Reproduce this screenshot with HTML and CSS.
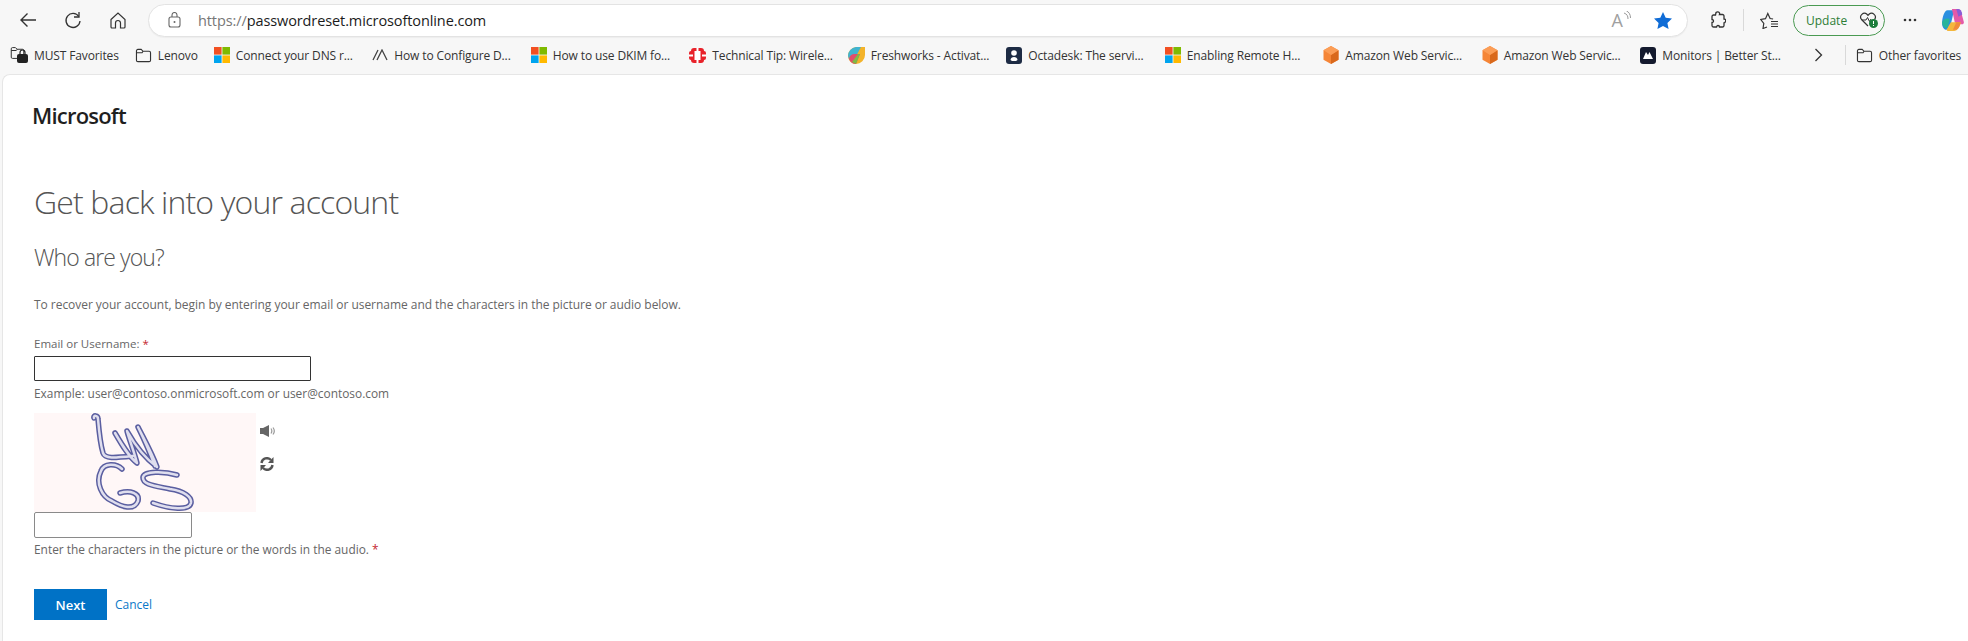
FILE: index.html
```html
<!DOCTYPE html>
<html lang="en">
<head>
<meta charset="utf-8">
<title>Get back into your account</title>
<link rel="stylesheet" href="styles.css">
</head>
<body>
<svg class="defs" width="0" height="0" aria-hidden="true">
  <symbol id="ms" viewBox="0 0 16 16">
    <rect x="0" y="0" width="7.6" height="7.6" fill="#f25022"/>
    <rect x="8.4" y="0" width="7.6" height="7.6" fill="#7fba00"/>
    <rect x="0" y="8.4" width="7.6" height="7.6" fill="#00a4ef"/>
    <rect x="8.4" y="8.4" width="7.6" height="7.6" fill="#ffb900"/>
  </symbol>
  <symbol id="folder" viewBox="0 0 18 16">
    <path d="M1.5 13V3a1.5 1.5 0 0 1 1.5-1.500h3.500l2 2H15A1.500 1.500 0 0 1 16.500 5v8a1.500 1.500 0 0 1-1.500 1.500H3A1.500 1.500 0 0 1 1.500 13z" fill="none" stroke="#333" stroke-width="1.200"/>
    <path d="M1.500 5h6l1-1.500" fill="none" stroke="#333" stroke-width="1.200"/>
  </symbol>
  <symbol id="aws" viewBox="0 0 16 18">
    <path d="M8 0l7.500 4.300v9.400L8 18 .5 13.700V4.300z" fill="#f58536"/>
    <path d="M8 9l7.500-4.700v9.400L8 18z" fill="#d9691c"/>
    <path d="M8 0l7.500 4.300L8 9 .5 4.300z" fill="#fb9d56"/>
  </symbol>
</svg>

<header class="toolbar">
  <svg class="tool back" width="18" height="16" viewBox="0 0 18 16"><path d="M17 8H2M8.500 1.500L2 8l6.500 6.500" fill="none" stroke="#333" stroke-width="1.400"/></svg>
  <svg class="tool reload" width="18" height="18" viewBox="0 0 18 18"><path d="M14.800 5.500A7 7 0 1 0 16 10" fill="none" stroke="#333" stroke-width="1.300"/><path d="M15 1v5h-5" fill="none" stroke="#333" stroke-width="1.300"/></svg>
  <svg class="tool home" width="16" height="17" viewBox="0 0 16 17"><path d="M1 7.500L8 1l7 6.500V15a1 1 0 0 1-1 1h-3.500v-5a2.500 2.500 0 0 0-5 0v5H2a1 1 0 0 1-1-1z" fill="none" stroke="#333" stroke-width="1.200"/></svg>
  <div class="address">
    <svg class="lock" width="13" height="16" viewBox="0 0 13 16"><rect x="1" y="5" width="11" height="10" rx="2" fill="none" stroke="#666" stroke-width="1.100"/><path d="M4 5V3a2.500 2.500 0 0 1 5 0v2" fill="none" stroke="#666" stroke-width="1.100"/><circle cx="6.500" cy="10" r="1" fill="#666"/></svg>
    <span class="url"><span class="scheme">https://</span>passwordreset.microsoftonline.com</span>
    <span class="read">A<svg width="8" height="11" viewBox="0 0 8 11"><path d="M1 2c3 1 4 3 4 6M3.500 0c2.500 1 4 3.500 4 7" fill="none" stroke="#999" stroke-width="1"/></svg></span>
    <svg class="star" width="18" height="17" viewBox="0 0 18 17"><path d="M9 0l2.700 5.800 6.300.8-4.600 4.300 1.200 6.100L9 14l-5.600 3 1.200-6.100L0 6.600l6.300-.8z" fill="#0f6cd6"/></svg>
  </div>
  <svg class="tool ext" width="16" height="18" viewBox="0 0 16 18"><path d="M6 1.500c1-1 3-1 3.500.5.300 1 0 1.500 0 1.500h3a1.500 1.500 0 0 1 1.500 1.500v3c1.500 0 2 1 1.500 2.500s-1.500 1.500-1.500 1.500v2.500A1.500 1.500 0 0 1 12.500 16h-3c0-2-3-2-3 0h-3A1.500 1.500 0 0 1 2 14.500v-3c2 0 2-3 0-3V5.500A1.500 1.500 0 0 1 3.500 4h2z" fill="none" stroke="#333" stroke-width="1.300"/></svg>
  <span class="divider tall"></span>
  <svg class="tool favs" width="18" height="17" viewBox="0 0 18 17"><path d="M7 15l-4 1.500.8-5L.8 7.500l4.700-.8L7.800 1.500l2.300 5 3 .5" fill="none" stroke="#333" stroke-width="1.200"/><path d="M11 9.500h7M11 12h7M11 14.500h7" stroke="#333" stroke-width="1.100"/></svg>
  <div class="update">
    <span>Update</span>
    <svg width="20" height="18" viewBox="0 0 20 18"><path d="M9 15L2.500 8.500A3.800 3.800 0 0 1 8 3.300l1 1 1-1a3.800 3.800 0 0 1 5.500 5.200" fill="none" stroke="#333" stroke-width="1.200"/><path d="M3 9h4l1.500-2.500 2 4L12 8" fill="none" stroke="#333" stroke-width="1"/><circle cx="14.500" cy="12.500" r="4.500" fill="#1d7d3c"/><rect x="14" y="10" width="1" height="3" fill="#fff"/><rect x="14" y="14" width="1" height="1" fill="#fff"/></svg>
  </div>
  <svg class="tool dots" width="14" height="4" viewBox="0 0 14 4"><circle cx="2" cy="2" r="1.300" fill="#333"/><circle cx="7" cy="2" r="1.300" fill="#333"/><circle cx="12" cy="2" r="1.300" fill="#333"/></svg>
  <svg class="tool copilot" width="24" height="24" viewBox="0 0 20 22">
    <path d="M5 2h6L8 15c-.5 3-2 5-4 5-2.500 0-4-3-4-6 0-5 2-12 5-12z" fill="#2a8fe0"/>
    <path d="M9 1h5c2 0 3 1 3.500 3L20 13c0 2-2 2-3 2h-5z" fill="#e45aa8"/>
    <path d="M13 1h2c2 0 3 2 3.500 5L15 8z" fill="#8b5cd6"/>
    <path d="M4 20l4-7h9c-.5 4-3 8-6 8H5z" fill="#f4b73c"/>
    <path d="M10 20l3-7h4c-.5 3-2 7-5 7z" fill="#f08a3c"/>
    <path d="M0 13c1-3 4-4 7-3l-2 8c-2 1-5-1-5-5z" fill="#27b39b"/>
  </svg>
</header>

<nav class="bookmarks">
  <div class="bm bm-must">
    <svg class="icon" width="19" height="18" viewBox="0 0 19 18"><use href="#folder" width="15" height="14"/><rect x="7" y="8" width="11" height="9" rx="2" fill="#222"/><path d="M10 8V6.500a2.500 2.500 0 0 1 5 0V8" fill="none" stroke="#222" stroke-width="1.200"/></svg>
    <span>MUST Favorites</span>
  </div>
  <div class="bm bm-lenovo"><svg class="icon" width="17" height="15"><use href="#folder" width="17" height="15"/></svg><span>Lenovo</span></div>
  <div class="bm bm-first"><svg class="icon" width="16" height="16"><use href="#ms"/></svg><span>Connect your DNS r...</span></div>
  <div class="bm"><svg class="icon" width="16" height="12" viewBox="0 0 16 12"><path d="M1 11L6 1M5 11L10 1l5 10" fill="none" stroke="#444" stroke-width="1.300"/></svg><span>How to Configure D...</span></div>
  <div class="bm"><svg class="icon" width="16" height="16"><use href="#ms"/></svg><span>How to use DKIM fo...</span></div>
  <div class="bm"><svg class="icon" width="17" height="15" viewBox="0 0 17 15"><rect x="2" y="0" width="13" height="15" rx="3" fill="#e8222a"/><rect y="3" width="17" height="9" rx="2" fill="#e8222a"/><rect x="5.500" y="3" width="6" height="9" fill="#fff"/><rect x="0" y="6.500" width="4" height="2" fill="#fff"/><rect x="13" y="6.500" width="4" height="2" fill="#fff"/><rect x="7.500" y="0" width="2" height="3" fill="#fff"/><rect x="7.500" y="12" width="2" height="3" fill="#fff"/></svg><span>Technical Tip: Wirele...</span></div>
  <div class="bm"><svg class="icon" width="17" height="17" viewBox="0 0 17 17"><path d="M8 0h9v8a9 9 0 0 1-9 9 8 8 0 0 1-8-8 9 9 0 0 1 8-9z" fill="#f3b32a"/><path d="M0 9a9 9 0 0 1 8-9h5L5 15a8 8 0 0 1-5-6z" fill="#3fb4d0"/><path d="M1 12a6 6 0 0 1 6-5h5L8 17c-3 0-6-2-7-5z" fill="#e14d6a"/><path d="M4 15l6-8h2L8 17z" fill="#7dbb45"/></svg><span>Freshworks - Activat...</span></div>
  <div class="bm"><svg class="icon" width="16" height="17" viewBox="0 0 16 17"><rect width="16" height="17" rx="3" fill="#1d2b44"/><circle cx="8" cy="6" r="2.800" fill="#fff"/><path d="M4.500 13c0-4 7-4 7 0l-1.500 1H6z" fill="#fff"/></svg><span>Octadesk: The servi...</span></div>
  <div class="bm"><svg class="icon" width="16" height="16"><use href="#ms"/></svg><span>Enabling Remote H...</span></div>
  <div class="bm"><svg class="icon" width="16" height="18"><use href="#aws"/></svg><span>Amazon Web Servic...</span></div>
  <div class="bm"><svg class="icon" width="16" height="18"><use href="#aws"/></svg><span>Amazon Web Servic...</span></div>
  <div class="bm"><svg class="icon" width="16" height="17" viewBox="0 0 16 17"><rect width="16" height="17" rx="3" fill="#141a2e"/><path d="M3 12l3-7 2 3 1.500-3L13 12z" fill="#fff"/></svg><span>Monitors | Better St...</span></div>
  <svg class="more" width="9" height="14" viewBox="0 0 9 14"><path d="M1.500 1l6 6-6 6" fill="none" stroke="#333" stroke-width="1.300"/></svg>
  <span class="divider short"></span>
  <div class="bm bm-other"><svg class="icon" width="17" height="15"><use href="#folder" width="17" height="15"/></svg><span>Other favorites</span></div>
</nav>

<main class="page">
  <div class="brand">Microsoft</div>
  <h1 class="title">Get back into your account</h1>
  <h2 class="subtitle">Who are you?</h2>
  <p class="intro">To recover your account, begin by entering your email or username and the characters in the picture or audio below.</p>
  <label class="label" for="email">Email or Username: <span class="req">*</span></label>
  <input class="field field-email" id="email" type="text">
  <p class="example">Example: user@contoso.onmicrosoft.com or user@contoso.com</p>
  <div class="captcha-row">
    <div class="captcha">
      <svg width="222" height="99" viewBox="0 0 222 99">
        <g class="stroke-outer">
          <path d="M60 5C59 2 64 2 64 6C65 18 66 30 69 40C71 46 80 45 99 43"/>
          <path d="M81 20C88 32 95 44 103 50C100 38 95 26 93 18C102 34 112 46 123 54C118 40 110 26 104 14C110 26 116 40 121 53"/>
          <path d="M88 56C82 50 70 50 67 58C61 70 68 84 78 88C88 94 100 98 104 88C106 80 96 77 86 80"/>
          <path d="M143 62C130 58 110 58 109 64C108 72 122 73 136 76C150 78 158 84 157 90C155 98 136 96 119 90"/>
        </g>
        <g class="stroke-inner">
          <path d="M60 5C59 2 64 2 64 6C65 18 66 30 69 40C71 46 80 45 99 43"/>
          <path d="M81 20C88 32 95 44 103 50C100 38 95 26 93 18C102 34 112 46 123 54C118 40 110 26 104 14C110 26 116 40 121 53"/>
          <path d="M88 56C82 50 70 50 67 58C61 70 68 84 78 88C88 94 100 98 104 88C106 80 96 77 86 80"/>
          <path d="M143 62C130 58 110 58 109 64C108 72 122 73 136 76C150 78 158 84 157 90C155 98 136 96 119 90"/>
        </g>
      </svg>
    </div>
    <div class="captcha-tools">
      <svg width="15" height="12" viewBox="0 0 15 12"><path d="M0 3h3l6-3v12L3 9H0z" fill="#666"/><path d="M11 3.500c1 1.500 1 3.500 0 5M13 2.500c1.500 2 1.500 5 0 7" fill="none" stroke="#999" stroke-width="1.200"/></svg>
      <svg width="14" height="14" viewBox="0 0 14 14"><path d="M1.500 6A5.500 5.500 0 0 1 11 3M12.500 8A5.500 5.500 0 0 1 3 11" fill="none" stroke="#555" stroke-width="2.400"/><path d="M13.500 0v6H8zM.5 14V8h5.500z" fill="#555"/></svg>
    </div>
  </div>
  <input class="field field-captcha" type="text" aria-label="Characters">
  <p class="hint">Enter the characters in the picture or the words in the audio. <span class="req">*</span></p>
  <div class="actions">
    <button class="next" type="button">Next</button>
    <a class="cancel" href="#">Cancel</a>
  </div>
</main>
</body>
</html>
```

FILE: styles.css
```css
* { box-sizing: border-box; }

html, body {
  margin: 0;
  height: 641px;
  overflow: hidden;
}

body {
  background: #f7f7f7;
  font-family: "Open Sans", "Noto Sans", sans-serif;
  color: #333;
}

.defs { position: absolute; }

.toolbar {
  display: flex;
  align-items: center;
  height: 38px;
  padding-top: 2px;
}

.tool { flex: none; }
.back { margin-left: 19px; }
.reload { margin-left: 27px; }
.home { margin-left: 28px; }
.ext { margin-left: 22px; }
.favs { margin-left: 16px; }
.dots { margin-left: 18px; }
.copilot { margin-left: 24px; }

.address {
  display: flex;
  align-items: center;
  width: 1540px;
  height: 33px;
  margin-left: 22px;
  padding-left: 19px;
  background: #fff;
  border: 1px solid #e3e3e3;
  border-radius: 17px;
  box-shadow: 0 1px 1px rgba(0, 0, 0, 0.04);
}

.url {
  margin-left: 17px;
  font-size: 14.500px;
  letter-spacing: -0.1px;
  color: #1b1b1b;
  flex: 1;
}

.scheme { color: #777; }

.read {
  display: flex;
  align-items: flex-start;
  font-size: 18px;
  line-height: 1;
  color: #a0a0a0;
}

.star { margin-left: 23px; margin-right: 15px; }

.divider { flex: none; background: #d9d9d9; width: 1px; }
.divider.tall { height: 22px; margin-left: 17px; }
.divider.short { height: 20px; margin-left: 22px; }

.update {
  display: flex;
  align-items: center;
  gap: 12px;
  width: 92px;
  height: 31px;
  margin-left: 15px;
  padding-left: 12px;
  border: 1.500px solid #4a9a52;
  border-radius: 16px;
  font-size: 12px;
  color: #2e7d36;
}

.bookmarks {
  display: flex;
  align-items: center;
  height: 36px;
  padding-bottom: 2px;
  font-size: 12px;
  letter-spacing: -0.13px;
  color: #333;
  white-space: nowrap;
}

.bm {
  display: flex;
  align-items: center;
  gap: 6px;
  width: 158.500px;
  flex: none;
}

.icon { flex: none; }

.bm-must { width: auto; margin-left: 10px; gap: 5px; }
.bm-lenovo { width: auto; margin-left: 16px; }
.bm-first { margin-left: 16px; }
.bm-other { width: auto; margin-left: 10px; }

.more { flex: none; margin-left: 15px; }

.page {
  height: 567px;
  margin-left: 2px;
  padding: 28px 0 0 31px;
  background: #fff;
  border-top: 1px solid #e6e6e6;
  border-left: 1px solid #e6e6e6;
  border-top-left-radius: 8px;
  font-size: 11.900px;
  color: #666;
}

.brand {
  height: 24px;
  margin-left: -2px;
  font-size: 22px;
  font-weight: 600;
  line-height: 24px;
  letter-spacing: -0.8px;
  color: #1f1f1f;
}

.title {
  margin: 53px 0 0;
  font-size: 32px;
  font-weight: 300;
  line-height: 44px;
  letter-spacing: -0.85px;
  color: #555;
}

.subtitle {
  margin: 17px 0 0;
  font-size: 23px;
  font-weight: 300;
  line-height: 32px;
  letter-spacing: -0.9px;
  color: #555;
}

.intro {
  margin: 24px 0 0;
  font-size: 12px;
  line-height: 16px;
  letter-spacing: -0.04px;
}

.label {
  display: block;
  margin-top: 23px;
  font-size: 11.500px;
  line-height: 16px;
}

.req { color: #c4262e; }

.field {
  display: block;
  margin: 0;
  padding: 0;
  background: #fff;
  outline: none;
}

.field-email {
  width: 277px;
  height: 25px;
  margin-top: 4px;
  border: 1px solid #333;
  border-radius: 1px;
}

.example {
  margin: 4px 0 0;
  line-height: 16px;
}

.captcha-row {
  display: flex;
  margin-top: 12px;
}

.captcha {
  width: 222px;
  height: 99px;
  background: #fff7f7;
}

.captcha svg { display: block; }

.captcha-tools {
  display: flex;
  flex-direction: column;
  align-items: flex-start;
  gap: 20px;
  margin-left: 4px;
  padding-top: 12px;
}

.stroke-outer path,
.stroke-inner path {
  fill: none;
  stroke-linecap: round;
  stroke-linejoin: round;
}

.stroke-outer path { stroke: #5a5ea0; stroke-width: 5.500; }
.stroke-inner path { stroke: #dfdeee; stroke-width: 2.500; }

.field-captcha {
  width: 158px;
  height: 26px;
  border: 1px solid #8a8a8a;
  border-radius: 2px;
}

.hint {
  margin: 3px 0 0;
  line-height: 16px;
}

.actions {
  display: flex;
  align-items: center;
  gap: 8px;
  margin-top: 32px;
}

.next {
  width: 73px;
  height: 31px;
  padding: 0;
  background: #0072c6;
  border: 0;
  font-family: inherit;
  font-size: 13px;
  font-weight: 600;
  color: #fff;
}

.cancel {
  font-size: 12px;
  color: #0a78c8;
  text-decoration: none;
}
```
